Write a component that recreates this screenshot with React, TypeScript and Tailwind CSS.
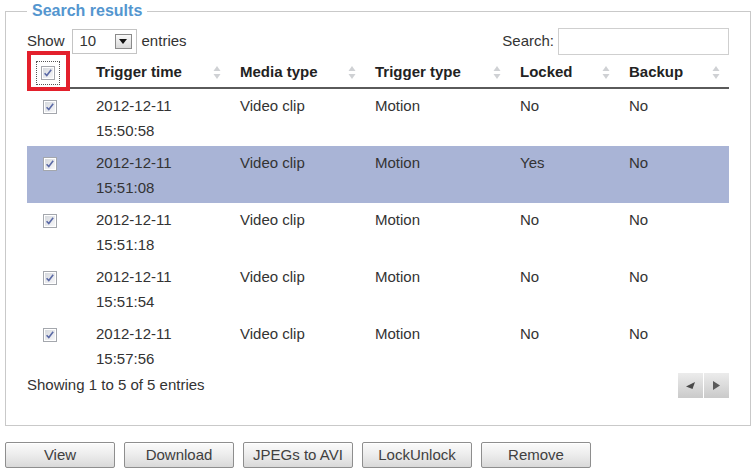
import React from 'react';

type Clip = {
  date: string;
  time: string;
  media: string;
  trigger: string;
  locked: string;
  backup: string;
  selected?: boolean;
};

const clips: Clip[] = [
  { date: '2012-12-11', time: '15:50:58', media: 'Video clip', trigger: 'Motion', locked: 'No', backup: 'No' },
  { date: '2012-12-11', time: '15:51:08', media: 'Video clip', trigger: 'Motion', locked: 'Yes', backup: 'No', selected: true },
  { date: '2012-12-11', time: '15:51:18', media: 'Video clip', trigger: 'Motion', locked: 'No', backup: 'No' },
  { date: '2012-12-11', time: '15:51:54', media: 'Video clip', trigger: 'Motion', locked: 'No', backup: 'No' },
  { date: '2012-12-11', time: '15:57:56', media: 'Video clip', trigger: 'Motion', locked: 'No', backup: 'No' },
];

const columns = ['Trigger time', 'Media type', 'Trigger type', 'Locked', 'Backup'];

const gridCols = 'grid grid-cols-[57px_144px_135px_145px_109px_110px]';

function CheckBox() {
  return (
    <svg width="14" height="14" viewBox="0 0 14 14" className="block">
      <defs>
        <linearGradient id="cbFill" x1="0" y1="0" x2="1" y2="1">
          <stop offset="0" stopColor="#d6d9de" />
          <stop offset="1" stopColor="#f7f7f9" />
        </linearGradient>
      </defs>
      <rect x="0.5" y="0.5" width="13" height="13" fill="#fff" stroke="#a4a7ad" />
      <rect x="2" y="2" width="10" height="10" fill="url(#cbFill)" />
      <path d="M3.6 7.2 L5.8 9.6 L10.2 3.8" fill="none" stroke="#5b6aa6" strokeWidth="1.6" />
    </svg>
  );
}

function SortIcon() {
  return (
    <svg width="8" height="15" viewBox="0 0 8 15" className="block">
      <path d="M4 1 L7.5 6 L0.5 6 Z" fill="#cfd1d4" />
      <path d="M4 14 L7.5 9 L0.5 9 Z" fill="#cfd1d4" />
    </svg>
  );
}

function ActionButton({ label }: { label: string }) {
  return (
    <button className="w-[110px] h-[26px] rounded-[2px] border border-[#8e8e8e] bg-gradient-to-b from-[#fbfbfb] via-[#ececec] to-[#d9d9d9] text-[15px] text-[#404040] shadow-[inset_0_1px_0_#fff]">
      {label}
    </button>
  );
}

export default function App() {
  return (
    <div className="w-[753px] h-[470px] bg-white font-['Liberation_Sans',Arial,sans-serif] text-[15px] text-[#333]">
      <fieldset className="ml-[5px] w-[746px] h-[426px] border border-[#c9c9c9] px-[21px] pt-[6px]">
        <legend className="px-[5px] text-[16px] leading-[22px] font-bold text-[#5496cf]">Search results</legend>

        {/* length selector + filter */}
        <div className="flex items-center justify-between h-[28px] -mt-[1px]">
          <div className="flex items-center">
            <span>Show</span>
            <div className="ml-[7px] w-[65px] h-[25px] border border-[#c4c4c4] flex items-center justify-between pl-[7px] pr-[4px]">
              <span>10</span>
              <div className="w-[17px] h-[15px] border border-[#8a8a8a] bg-gradient-to-b from-[#fafafa] to-[#d8d8d8] flex items-center justify-center">
                <svg width="8" height="5" viewBox="0 0 8 5">
                  <path d="M0 0 L8 0 L4 5 Z" fill="#111" />
                </svg>
              </div>
            </div>
            <span className="ml-[5px]">entries</span>
          </div>
          <div className="flex items-center">
            <span>Search:</span>
            <input className="ml-[4px] w-[171px] h-[27px] border border-[#cfcfcf] outline-none" />
          </div>
        </div>

        {/* table header */}
        <div className={`${gridCols} h-[34px] pt-[3px] border-b-2 border-[#5a5a5a] items-center`}>
          <div className="relative h-full flex items-center pl-[14px]">
            <div className="relative">
              <CheckBox />
              <div className="absolute -inset-[5px] border border-dotted border-[#555]" />
            </div>
            <div className="absolute left-0 -top-[7px] w-[43px] h-[40px] border-[4px] border-[#e3202c]" />
          </div>
          {columns.map((c) => (
            <div key={c} className="flex items-center justify-between pl-[12px] pr-[7px] font-bold text-[#222]">
              <span>{c}</span>
              <SortIcon />
            </div>
          ))}
        </div>

        {/* rows */}
        {clips.map((r) => (
          <div
            key={r.time}
            className={`${gridCols} h-[57px] pt-[4px] leading-[25px] ${r.selected ? 'bg-[#a9b4d6]' : ''}`}
          >
            <div className="pl-[16px] pt-[7px]">
              <CheckBox />
            </div>
            <div className="pl-[12px]">
              <div>{r.date}</div>
              <div>{r.time}</div>
            </div>
            <div className="pl-[12px]">{r.media}</div>
            <div className="pl-[12px]">{r.trigger}</div>
            <div className="pl-[12px]">{r.locked}</div>
            <div className="pl-[12px]">{r.backup}</div>
          </div>
        ))}

        {/* info + paging */}
        <div className="flex items-center justify-between h-[25px] mt-[-1px]">
          <span>Showing 1 to 5 of 5 entries</span>
          <div className="flex gap-[1px]">
            <div className="w-[25px] h-[25px] bg-gradient-to-b from-[#ececec] to-[#cacaca] flex items-center justify-center">
              <svg width="9" height="7" viewBox="0 0 9 7">
                <path d="M0 4.5 L9 0 L6.5 7 Z" fill="#4a4a4a" />
              </svg>
            </div>
            <div className="w-[25px] h-[25px] bg-gradient-to-b from-[#ececec] to-[#cacaca] flex items-center justify-center">
              <svg width="7" height="9" viewBox="0 0 7 9">
                <path d="M0 0 L7 4.5 L0 9 Z" fill="#5a5a5a" />
              </svg>
            </div>
          </div>
        </div>
      </fieldset>

      <div className="flex gap-[9px] ml-[5px] mt-[16px]">
        <ActionButton label="View" />
        <ActionButton label="Download" />
        <ActionButton label="JPEGs to AVI" />
        <ActionButton label="LockUnlock" />
        <ActionButton label="Remove" />
      </div>
    </div>
  );
}
